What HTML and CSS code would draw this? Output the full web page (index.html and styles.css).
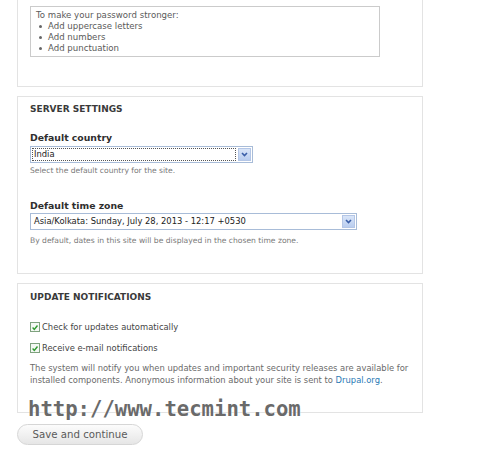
FILE: index.html
```
<!DOCTYPE html>
<html lang="en">
<head>
    <meta charset="UTF-8" />
    <title>Configure site</title>
    <link rel="stylesheet" href="styles.css">
</head>
<body>
<div class="page">
    <div class="fieldset cut">
        <div class="password-hint">
            <p>To make your password stronger:</p>
            <ul>
                <li>Add uppercase letters</li>
                <li>Add numbers</li>
                <li>Add punctuation</li>
            </ul>
        </div>
    </div>

    <div class="fieldset server">
        <div class="legend">SERVER SETTINGS</div>
        <div class="form-item">
            <label>Default country</label>
            <div class="select country focused">
                <span class="value">India</span>
                <span class="arrow">
                    <svg width="11" height="11" viewBox="0 0 11 11"><path d="M3 4 L5.5 6.5 L8 4" fill="none" stroke="#3a5ea8" stroke-width="1.6"/></svg>
                </span>
            </div>
            <div class="description">Select the default country for the site.</div>
        </div>
        <div class="form-item tz">
            <label>Default time zone</label>
            <div class="select zone">
                <span class="value">Asia/Kolkata: Sunday, July 28, 2013 - 12:17 +0530</span>
                <span class="arrow">
                    <svg width="11" height="11" viewBox="0 0 11 11"><path d="M3 4 L5.5 6.5 L8 4" fill="none" stroke="#3a5ea8" stroke-width="1.6"/></svg>
                </span>
            </div>
            <div class="description tz-desc">By default, dates in this site will be displayed in the chosen time zone.</div>
        </div>
    </div>

    <div class="fieldset updates">
        <div class="legend">UPDATE NOTIFICATIONS</div>
        <div class="check">
            <span class="box"><svg width="9" height="9" viewBox="0 0 9 9"><path d="M1.8 4.6 L3.7 6.6 L7.3 2.2" fill="none" stroke="#2f9a2f" stroke-width="1.6"/></svg></span>
            <span>Check for updates automatically</span>
        </div>
        <div class="check">
            <span class="box"><svg width="9" height="9" viewBox="0 0 9 9"><path d="M1.8 4.6 L3.7 6.6 L7.3 2.2" fill="none" stroke="#2f9a2f" stroke-width="1.6"/></svg></span>
            <span>Receive e-mail notifications</span>
        </div>
        <p class="note">The system will notify you when updates and important security releases are available for installed components. Anonymous information about your site is sent to <a href="#">Drupal.org</a>.</p>
        <div class="watermark">http://www.tecmint.com</div>
    </div>

    <button class="submit">Save and continue</button>
</div>
</body>
</html>
```

FILE: styles.css
```
* { margin: 0; padding: 0; box-sizing: border-box; }
body {
    font-family: "DejaVu Sans", Verdana, sans-serif;
    font-size: 8.4px;
    color: #494949;
    background: #fff;
}
.page {
    padding-left: 17px;
    width: 423px;
}
.fieldset {
    border: 1px solid #e3e3e3;
    padding: 0 12px;
    margin-bottom: 9px;
    position: relative;
}
.fieldset.cut {
    border-top: none;
    height: 87px;
    padding-top: 6px;
}
.password-hint {
    width: 350px;
    height: 51px;
    border: 1px solid #cbcbcb;
    padding: 3px 5px;
    line-height: 11px;
    font-size: 8.6px;
    color: #5a5a5a;
}
.password-hint ul {
    list-style: none;
}
.password-hint li {
    padding-left: 12px;
    position: relative;
}
.password-hint li::before {
    content: "";
    position: absolute;
    left: 3px;
    top: 4px;
    width: 3px;
    height: 3px;
    border-radius: 50%;
    background: #666;
}
.legend {
    font-size: 9px;
    font-weight: bold;
    color: #3a3a3a;
    line-height: 12px;
}
.server {
    height: 178px;
    padding-top: 6px;
}
.form-item {
    margin-top: 17px;
}
.form-item label {
    display: block;
    font-size: 9.3px;
    font-weight: bold;
    color: #2e2e2e;
    line-height: 12px;
}
.select {
    display: flex;
    align-items: center;
    height: 17px;
    border: 1px solid #a8bcd8;
    background: #fff;
    margin-top: 2px;
    padding: 1px;
}
.select .value {
    flex: 1;
    height: 13px;
    line-height: 13px;
    padding-left: 2px;
    font-size: 8.4px;
    color: #222;
    white-space: nowrap;
    overflow: hidden;
}
.select.focused .value {
    outline: 1px dotted #555;
    outline-offset: -1px;
}
.select .arrow {
    width: 13px;
    height: 13px;
    margin-left: 2px;
    background: linear-gradient(#d9e5f8, #b9cdef);
    border: 1px solid #b4c6e6;
    display: flex;
    align-items: center;
    justify-content: center;
}
.country { width: 223px; }
.zone { width: 327px; margin-top: 1px; }
.description {
    font-size: 7.6px;
    color: #7a7a7a;
    line-height: 11px;
    margin-top: 2px;
}
.form-item.tz { margin-top: 24px; }
.tz-desc { margin-top: 5px; }
.updates {
    height: 130px;
    padding-top: 7px;
}
.check {
    display: flex;
    align-items: center;
    line-height: 12px;
    margin-top: 9px;
    color: #444;
}
.updates .legend + .check { margin-top: 18px; }
.check .box {
    width: 10px;
    height: 10px;
    border: 1px solid #7fa27f;
    background: #f4f8f4;
    margin-right: 2px;
    display: flex;
    align-items: center;
    justify-content: center;
}
.note {
    margin-top: 8px;
    line-height: 12px;
    color: #6a6a6a;
}
.note a {
    color: #2a7ab5;
    text-decoration: none;
}
.watermark {
    position: absolute;
    left: 10px;
    top: 113px;
    font-family: "DejaVu Sans Mono", monospace;
    font-weight: bold;
    font-size: 20.6px;
    line-height: 24px;
    color: #6a6a6a;
    text-shadow: 0 0 2px rgba(255,255,255,0.9);
}
.submit {
    display: block;
    margin-top: 11px;
    width: 126px;
    height: 21px;
    border: 1px solid #d6d6d6;
    border-radius: 11px;
    background: linear-gradient(#fcfcfc, #e6e6e6);
    font-family: "DejaVu Sans", Verdana, sans-serif;
    font-size: 10.2px;
    color: #5a5a5a;
}
```
